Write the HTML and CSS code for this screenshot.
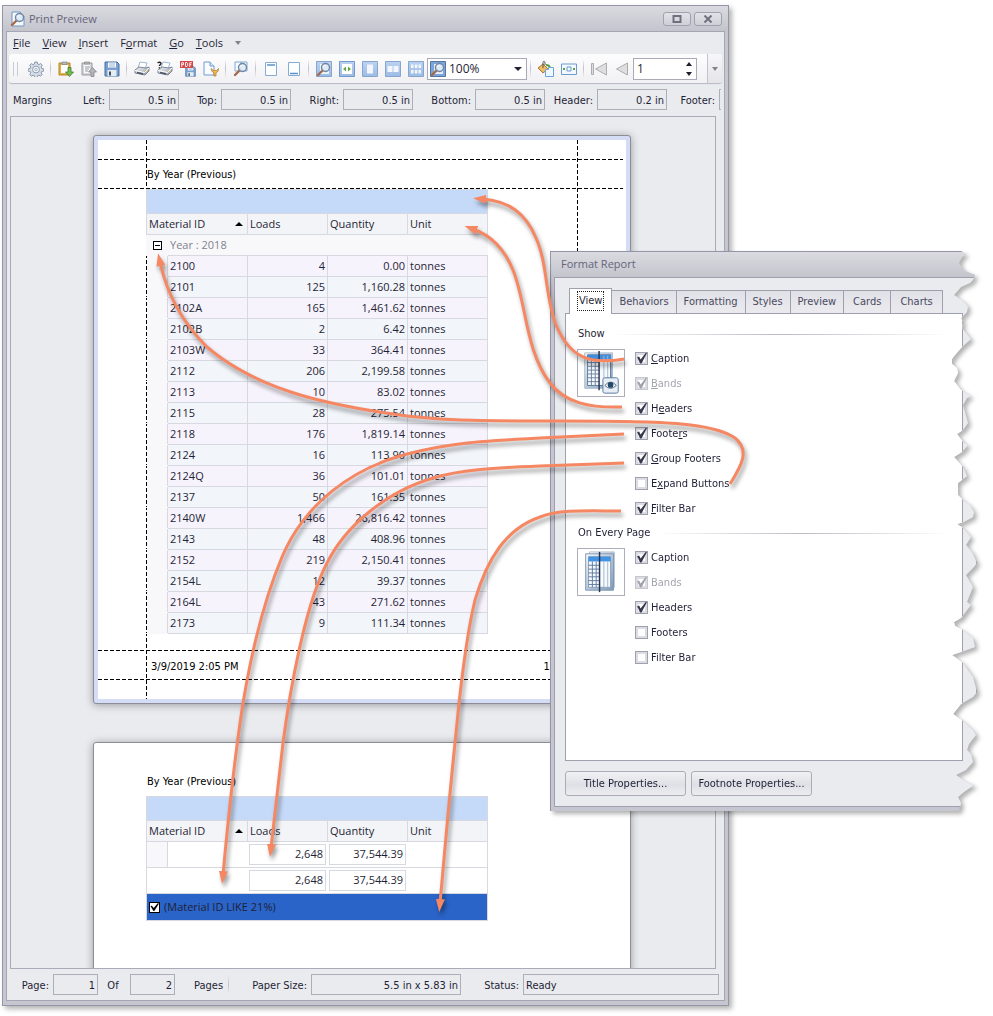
FILE: index.html
```html
<!DOCTYPE html>
<html lang="en">
<head>
<meta charset="utf-8">
<title>Print Preview</title>
<link rel="stylesheet" href="styles.css">
</head>
<body>
<svg class="defs" width="0" height="0" aria-hidden="true">
  <defs>
    <linearGradient id="blue" x1="0" y1="0" x2="0" y2="1"><stop offset="0" stop-color="#bcd2f0"/><stop offset="1" stop-color="#9dbce4"/></linearGradient>
    <linearGradient id="steel" x1="0" y1="0" x2="1" y2="1"><stop offset="0" stop-color="#f4f5f7"/><stop offset="1" stop-color="#8d98a8"/></linearGradient>
    <linearGradient id="book" x1="0" y1="0" x2="1" y2="1"><stop offset="0" stop-color="#f5f9fd"/><stop offset="1" stop-color="#7f9ab8"/></linearGradient>
    <symbol id="lens" viewBox="0 0 16 16">
      <path d="M7 9L2 14" stroke="#a5694a" stroke-width="2.4" stroke-linecap="round"/>
      <circle cx="9.5" cy="6.5" r="4" fill="#dce9f6" fill-opacity=".85" stroke="#71869f" stroke-width="1.4"/>
      <path d="M7.5 6a2.4 2.4 0 0 1 2-1.8" stroke="#fff" fill="none"/>
    </symbol>
    <symbol id="printer" viewBox="0 0 16 16">
      <path d="M6 1l7 1-2 6-7-1z" fill="#fff" stroke="#8aa6c4" stroke-width=".8"/>
      <path d="M1 9l4-3 7 1 3-1v4l-4 4L1 12z" fill="url(#steel)" stroke="#737e8e" stroke-width=".9"/>
      <path d="M1 9.500l9.500 2L15 7" fill="none" stroke="#fff" stroke-width="1"/>
      <path d="M3 11.500l6 1.500" stroke="#4c5664" stroke-width="1.400"/>
      <circle cx="12.500" cy="10.600" r=".9" fill="#e9c34d"/>
    </symbol>
    <symbol id="disk" viewBox="0 0 16 16">
      <path d="M1 1h12l2 2v12H1z" fill="#7aa0cf" stroke="#46709f"/>
      <path d="M4 1.500h8v5H4z" fill="#f8fbff"/><path d="M5 3h6M5 5h6" stroke="#9fb6d0"/>
      <path d="M3.500 9h9v6h-9z" fill="#e4ecf6"/><path d="M5 10.500h2v4H5z" fill="#47515f"/>
    </symbol>
  </defs>
</svg>

<main class="stage">
  <section class="window">
    <header class="titlebar">
      <svg width="16" height="16" viewBox="0 0 16 16" aria-hidden="true"><path d="M2 1h8l4 4v10H2z" fill="#f4f8fd" stroke="#6f97c6"/><use href="#lens" width="16" height="16"/></svg>
      <h1>Print Preview</h1>
      <button class="win-btn" aria-label="Maximize"><svg width="10" height="8" viewBox="0 0 10 8"><path d="M1.500 1h7v6h-7z" fill="none" stroke="#6f707f" stroke-width="2"/></svg></button>
      <button class="win-btn" aria-label="Close"><svg width="10" height="8" viewBox="0 0 10 8"><path d="M1.500.5l7 7M8.500.5l-7 7" stroke="#6f707f" stroke-width="2"/></svg></button>
    </header>

    <div class="client">
      <nav class="menu">
        <button><u>F</u>ile</button><button><u>V</u>iew</button><button><u>I</u>nsert</button><button>F<u>o</u>rmat</button><button><u>G</u>o</button><button><u>T</u>ools</button><button class="more" aria-label="More"><span class="tri"></span></button>
      </nav>

      <div class="toolbar">
        <span class="grip"></span>
        <button aria-label="Settings"><svg viewBox="0 0 16 16"><path d="M6.800 1h2.400l.4 2 1.300.6 1.800-1.100 1.600 1.700-1.100 1.700.5 1.400 2 .5v2.300l-2 .4-.6 1.400 1.100 1.700-1.600 1.600-1.700-1.100-1.400.6-.4 2H6.800l-.4-2-1.300-.6-1.800 1.100-1.600-1.600 1.100-1.700-.6-1.400-2-.4V7.800l2-.4.6-1.400-1.100-1.700 1.600-1.700 1.800 1.100L6.400 3z" fill="#d6dde7" stroke="#8291a6" stroke-width=".9"/><circle cx="8" cy="8.500" r="3.400" fill="#f5f7fa" stroke="#8c9bb0"/><circle cx="8" cy="8.500" r="1.200" fill="#fff" stroke="#8c9bb0" stroke-width=".8"/></svg></button>
        <span class="sep"></span>
        <button aria-label="Import"><svg viewBox="0 0 16 16"><path d="M1 2h11v12H1z" fill="#e4b04a" stroke="#b58423"/><path d="M3 4h7v8H3z" fill="#fff"/><path d="M4 1h5v2.500H4z" fill="#b4bac3" stroke="#7b8491" stroke-width=".7"/><path d="M10 6.500h3V11h2.500l-4 4.500-4-4.500H10z" fill="#78b956" stroke="#3d7e28" stroke-width=".8"/></svg></button>
        <button aria-label="Export"><svg viewBox="0 0 16 16"><path d="M1 2h10v12H1z" fill="#d5d6d9" stroke="#98999d"/><path d="M3 4h6v8H3z" fill="#fafafa"/><path d="M4 6h5M4 8h4M4 10h3" stroke="#999"/><path d="M3.500 1h5v2h-5z" fill="#bbb" stroke="#888" stroke-width=".7"/><path d="M10 15.500h3V11h2.500l-4-4.500-4 4.500H10z" fill="#b5b7ba" stroke="#85878b" stroke-width=".8"/></svg></button>
        <button aria-label="Save"><svg viewBox="0 0 16 16"><use href="#disk"/></svg></button>
        <span class="sep"></span>
        <button aria-label="Print"><svg viewBox="0 0 16 16"><use href="#printer"/></svg></button>
        <button aria-label="Print dialog"><svg viewBox="0 0 16 16"><use href="#printer"/><path d="M.8 2.200C1 .8 4 .8 4 2.500 4 3.800 2.400 3.600 2.400 5M2.400 6.200v1.300" fill="none" stroke="#222" stroke-width="1.400"/></svg></button>
        <button aria-label="Export PDF"><svg viewBox="0 0 16 16"><use href="#disk" x="5" y="5" width="11" height="11"/><path d="M0 0h13v7H0z" fill="#d64545"/><path d="M1.700 6V1.700h1.800v2H1.700M5.500 1.500v4H7l.7-1V2.500l-.7-1zM9.800 6V1.700h2M9.800 3.600h1.500" fill="none" stroke="#fff" stroke-width=".9"/></svg></button>
        <button aria-label="Page setup"><svg viewBox="0 0 16 16"><path d="M1 1h6l4 4v9H1z" fill="#f8fbff" stroke="#6f9bce"/><path d="M7 1v4h4" fill="#dbe8f7" stroke="#6f9bce"/><path d="M8 7.500l1 3 2 1v3.500h2v-3.500l2-1 .5-3-2 2h-3z" fill="#f1c15f" stroke="#b77d23" stroke-width=".8"/></svg></button>
        <span class="sep"></span>
        <button aria-label="Find"><svg viewBox="0 0 16 16"><path d="M2 1h12v9H2zM8 1v9" fill="#f6faff" stroke="#7fa9d6"/><use href="#lens"/></svg></button>
        <span class="sep"></span>
        <button aria-label="Header"><svg viewBox="0 0 16 16"><path d="M2.500 1.500h11v13h-11z" fill="#fdfeff" stroke="#86abd6"/><path d="M4 4h8" stroke="#5d8fca" stroke-width="1.500"/></svg></button>
        <button aria-label="Footer"><svg viewBox="0 0 16 16"><path d="M2.500 1.500h11v13h-11z" fill="#fdfeff" stroke="#86abd6"/><path d="M4 12.500h8" stroke="#5d8fca" stroke-width="1.500"/></svg></button>
        <span class="sep"></span>
        <button aria-label="Zoom"><svg viewBox="0 0 16 16"><path d="M.5.5h15v15H.5z" fill="url(#blue)" stroke="#86a6cf"/><path d="M4 3h7l2 2v8H4z" fill="#eef4fb"/><use href="#lens"/></svg></button>
        <button aria-label="Page width"><svg viewBox="0 0 16 16"><path d="M.5.5h15v15H.5z" fill="url(#blue)" stroke="#7399ca"/><path d="M3 3h10v10H3z" fill="#fff"/><path d="M4 8l3-2.500v5zM12 8L9 5.500v5z" fill="#5faa49"/></svg></button>
        <button aria-label="One page"><svg viewBox="0 0 16 16"><path d="M.5.5h15v15H.5z" fill="url(#blue)" stroke="#86a6cf"/><path d="M5 3.500h6v9H5z" fill="#f3f7fc"/></svg></button>
        <button aria-label="Two pages"><svg viewBox="0 0 16 16"><path d="M.5.5h15v15H.5z" fill="url(#blue)" stroke="#86a6cf"/><path d="M2.500 5h5v6h-5zM8.500 5h5v6h-5z" fill="#f3f7fc"/></svg></button>
        <button aria-label="Multiple pages"><svg viewBox="0 0 16 16"><path d="M.5.5h15v15H.5z" fill="url(#blue)" stroke="#86a6cf"/><path d="M3 3.500h2.500v3.500H3zM6.800 3.500h2.500v3.500H6.800zM10.500 3.500H13v3.500h-2.500zM3 9h2.500v3.500H3zM6.800 9h2.500v3.500H6.800zM10.500 9H13v3.500h-2.500z" fill="#f3f7fc"/></svg></button>
        <div class="combo">
          <svg viewBox="0 0 16 16"><path d="M.5.5h15v15H.5z" fill="#7ea5da" stroke="#54759f"/><path d="M4 3h7l2 2v8H4z" fill="#e3edf9"/><use href="#lens"/></svg>
          <select aria-label="Zoom level"><option>100%</option></select>
          <span class="tri dark"></span>
        </div>
        <span class="sep"></span>
        <button aria-label="Background"><svg viewBox="0 0 16 16"><path d="M0 7l5-4 5 5-5 4z" fill="#edbd65" stroke="#aa7b35"/><path d="M5 7V1.500C5-.2 7-.2 7 2v2" fill="none" stroke="#555"/><path d="M8 4c3 0 4 1 4 4" fill="none" stroke="#5aa347" stroke-width="2"/><path d="M7.500 8.500h3v-2h5v9h-8z" fill="#eff7ff" stroke="#6da4dc"/></svg></button>
        <button aria-label="Fit margins"><svg viewBox="0 0 16 16"><path d="M.5 3h15v10.500H.5z" fill="#f3f8fe" stroke="#6d9ad0"/><path d="M6 6h4v4H6z" fill="none" stroke="#6d9ad0"/><path d="M2 8h2M14 8h-2" stroke="#5aa347" stroke-width="2"/></svg></button>
        <span class="sep"></span>
        <button aria-label="First page"><svg viewBox="0 0 16 16"><path d="M.5 2.500h2v11h-2zM15.500 2v12L4.500 8z" fill="#dedede" stroke="#adadad"/></svg></button>
        <button aria-label="Previous page"><svg viewBox="0 0 16 16"><path d="M13.500 2v12L2.500 8z" fill="#dedede" stroke="#adadad"/></svg></button>
        <div class="spinner"><input type="text" value="1" aria-label="Page number"><span class="arrows"><i class="up"></i><i class="down"></i></span></div>
        <button class="overflow" aria-label="Toolbar options"><span class="tri"></span></button>
      </div>

      <div class="fields margins">
        <span>Margins</span>
        <label class="lead" for="m-left">Left:</label><input id="m-left" value="0.5 in">
        <label class="short" for="m-top">Top:</label><input id="m-top" value="0.5 in">
        <label class="mid" for="m-right">Right:</label><input id="m-right" value="0.5 in">
        <label class="long" for="m-bottom">Bottom:</label><input id="m-bottom" value="0.5 in">
        <label class="mid" for="m-header">Header:</label><input id="m-header" value="0.2 in">
        <label class="mid" for="m-footer">Footer:</label><input id="m-footer" value="">
      </div>

      <div class="preview">
        <article class="page selected">
          <div class="sheet">
            <div class="margin"></div>
            <div class="page-head">By Year (Previous)</div>
            <table class="grid">
              <colgroup><col class="c-indent"><col class="c-col"><col class="c-col"><col class="c-col"><col class="c-col"></colgroup>
              <thead>
                <tr class="caption"><td colspan="5"></td></tr>
                <tr class="heads"><th colspan="2">Material ID<span class="sort"></span></th><th>Loads</th><th>Quantity</th><th>Unit</th></tr>
              </thead>
              <tbody>
                <tr class="group"><td><button class="expand" aria-label="Collapse group"></button></td><td colspan="4">Year : 2018</td></tr>
                <tr><td></td><td>2100</td><td>4</td><td>0.00</td><td>tonnes</td></tr>
                <tr><td></td><td>2101</td><td>125</td><td>1,160.28</td><td>tonnes</td></tr>
                <tr><td></td><td>2102A</td><td>165</td><td>1,461.62</td><td>tonnes</td></tr>
                <tr><td></td><td>2102B</td><td>2</td><td>6.42</td><td>tonnes</td></tr>
                <tr><td></td><td>2103W</td><td>33</td><td>364.41</td><td>tonnes</td></tr>
                <tr><td></td><td>2112</td><td>206</td><td>2,199.58</td><td>tonnes</td></tr>
                <tr><td></td><td>2113</td><td>10</td><td>83.02</td><td>tonnes</td></tr>
                <tr><td></td><td>2115</td><td>28</td><td>275.54</td><td>tonnes</td></tr>
                <tr><td></td><td>2118</td><td>176</td><td>1,819.14</td><td>tonnes</td></tr>
                <tr><td></td><td>2124</td><td>16</td><td>113.90</td><td>tonnes</td></tr>
                <tr><td></td><td>2124Q</td><td>36</td><td>101.01</td><td>tonnes</td></tr>
                <tr><td></td><td>2137</td><td>50</td><td>161.35</td><td>tonnes</td></tr>
                <tr><td></td><td>2140W</td><td>1,466</td><td>26,816.42</td><td>tonnes</td></tr>
                <tr><td></td><td>2143</td><td>48</td><td>408.96</td><td>tonnes</td></tr>
                <tr><td></td><td>2152</td><td>219</td><td>2,150.41</td><td>tonnes</td></tr>
                <tr><td></td><td>2154L</td><td>12</td><td>39.37</td><td>tonnes</td></tr>
                <tr><td></td><td>2164L</td><td>43</td><td>271.62</td><td>tonnes</td></tr>
                <tr><td></td><td>2173</td><td>9</td><td>111.34</td><td>tonnes</td></tr>
              </tbody>
            </table>
            <div class="page-foot"><span>3/9/2019 2:05 PM</span><span>1 of 2</span></div>
            <div class="margin"></div>
          </div>
        </article>

        <article class="page">
          <div class="sheet">
            <div class="margin"></div>
            <div class="page-head">By Year (Previous)</div>
            <table class="grid summary">
              <colgroup><col class="c-indent"><col class="c-col"><col class="c-col"><col class="c-col"><col class="c-col"></colgroup>
              <thead>
                <tr class="caption"><td colspan="5"></td></tr>
                <tr class="heads"><th colspan="2">Material ID<span class="sort"></span></th><th>Loads</th><th>Quantity</th><th>Unit</th></tr>
              </thead>
              <tbody>
                <tr class="total"><td class="indent"></td><td></td><td><span>2,648</span></td><td><span>37,544.39</span></td><td></td></tr>
                <tr class="total"><td></td><td></td><td><span>2,648</span></td><td><span>37,544.39</span></td><td></td></tr>
                <tr class="filter"><td colspan="5"><label><input type="checkbox" checked>(Material ID LIKE 21%)</label></td></tr>
              </tbody>
            </table>
          </div>
        </article>
      </div>

      <div class="fields status">
        <label class="s-page" for="s-page">Page:</label><input class="num" id="s-page" value="1">
        <label class="s-of" for="s-of">Of</label><input class="num" id="s-of" value="2">
        <span class="s-pages">Pages</span><span class="sep"></span>
        <label class="s-size" for="s-size">Paper Size:</label><input class="size" id="s-size" value="5.5 in x 5.83 in">
        <label class="s-status" for="s-status">Status:</label><input class="ready" id="s-status" value="Ready">
      </div>
    </div>
  </section>

  <div class="dialog-shadow">
    <section class="dialog">
      <h2>Format Report</h2>
      <div class="dialog-body">
        <div class="tabs" role="tablist">
          <button class="active" role="tab" aria-selected="true"><span>View</span></button><button role="tab">Behaviors</button><button role="tab">Formatting</button><button role="tab">Styles</button><button role="tab">Preview</button><button role="tab">Cards</button><button role="tab">Charts</button>
        </div>
        <div class="panel">
          <h3>Show</h3>
          <div class="options">
            <div class="pic">
              <svg viewBox="0 0 48 48"><path d="M7 3h29v37H7z" fill="url(#book)" stroke="#a9bccf"/><path d="M10 5h24v32H10z" fill="#f7fafd" stroke="#5c7896"/><path d="M10 5h24v5H10z" fill="#3f8ee0"/><path d="M10 13h12M10 17h12M10 21h12M10 25h12M10 29h12M10 33h12M14 10v27M18 10v27" stroke="#6982a2"/><path d="M27 6v31M31 6v31" stroke="#a5b7cc"/><path d="M22 1v41" stroke="#27324f" stroke-width="1.500"/><rect x="26" y="29" width="16" height="16" rx="2" fill="#e7eef6" stroke="#587a9e"/><path d="M28 37q6-7 12 0q-6 6-12 0z" fill="#fff" stroke="#567"/><circle cx="34" cy="36.500" r="3" fill="#234a6c"/></svg>
            </div>
            <div class="checks">
              <label><input type="checkbox" checked><span><u>C</u>aption</span></label>
              <label class="off"><input type="checkbox" checked disabled><span><u>B</u>ands</span></label>
              <label><input type="checkbox" checked><span>H<u>e</u>aders</span></label>
              <label><input type="checkbox" checked><span>Foote<u>r</u>s</span></label>
              <label><input type="checkbox" checked><span><u>G</u>roup Footers</span></label>
              <label><input type="checkbox"><span>E<u>x</u>pand Buttons</span></label>
              <label><input type="checkbox" checked><span><u>F</u>ilter Bar</span></label>
            </div>
          </div>
          <h3>On Every Page</h3>
          <div class="options">
            <div class="pic">
              <svg viewBox="0 0 48 48"><path d="M12 3h26v37H12z" fill="url(#book)" stroke="#b6c5d5"/><path d="M8 5h29v38H8z" fill="url(#book)" stroke="#8299b1"/><path d="M11 8h23v32H11z" fill="#f7fafd" stroke="#8ba0b8"/><path d="M11 8h23v5H11z" fill="#4194e4"/><path d="M11 17h12M11 21h12M11 25h12M11 29h12M11 33h12M11 37h12M15 13v27M19 13v27" stroke="#5e7ca4"/><path d="M27 13v27M31 13v27" stroke="#a5b7cc"/><path d="M22.500 3v42" stroke="#27324f" stroke-width="1.500"/></svg>
            </div>
            <div class="checks">
              <label><input type="checkbox" checked><span>Caption</span></label>
              <label class="off"><input type="checkbox" checked disabled><span>Bands</span></label>
              <label><input type="checkbox" checked><span>Headers</span></label>
              <label><input type="checkbox"><span>Footers</span></label>
              <label><input type="checkbox"><span>Filter Bar</span></label>
            </div>
          </div>
        </div>
        <div class="actions"><button>Title Properties...</button><button>Footnote Properties...</button></div>
      </div>
    </section>
  </div>

  <svg class="callouts" width="800" height="1000" viewBox="0 0 800 1000" aria-hidden="true">
    <defs><marker id="head" markerUnits="userSpaceOnUse" markerWidth="14" markerHeight="10" refX="4" refY="5" orient="auto"><path d="M0 .5L13 5L0 9.500z" fill="#f58763"/></marker></defs>
    <g fill="none" stroke="#f58763" stroke-width="3">
      <path d="M624 359C590 365 570 358 556 325C545 297 548 265 536 238C526 214 510 201 482 199" marker-end="url(#head)"/>
      <path d="M622 407C590 408 565 403 550 383C525 350 527 305 513 270C504 248 490 235 473 229" marker-end="url(#head)"/>
      <path d="M730 484C742 465 750 450 735 438C712 422 660 421 560 421C500 421 440 421 400 415C320 404 255 388 207 347C180 320 166 290 160 262" marker-end="url(#head)"/>
      <path d="M624 434L540 438C480 441 450 443 407 454C350 469 304 505 282 557C264 600 251 655 243 703C235 755 228 820 223 875" marker-end="url(#head)"/>
      <path d="M624 463L540 466C490 468 460 470 433 478C385 492 345 527 327 563C305 605 290 690 283 743C279 780 275 815 271 848" marker-end="url(#head)"/>
      <path d="M621 511C590 511 560 509 540 517C505 529 487 560 475 600C463 650 458 715 455 743C449 800 444 860 440 903" marker-end="url(#head)"/>
    </g>
  </svg>
</main>
</body>
</html>
```
FILE: styles.css
```css
* { box-sizing: border-box; }
body { margin: 0; background: #fff; color: #1f1f35; font: 11px/14px "DejaVu Sans Condensed", "DejaVu Sans", sans-serif; }
button, input, select { font: inherit; color: inherit; margin: 0; }
button { border: 0; padding: 0; background: none; }
h1, h2, h3 { margin: 0; font-weight: normal; }
.defs { position: absolute; }
u { text-underline-offset: 1px; }

.stage { position: relative; padding: 5px 264px 11px 2px; }
.window { border: 1px solid #9495a6; background: #c6c6d0; padding: 0 3px 4px; box-shadow: 3px 3px 5px rgba(0, 0, 0, .3); }
.titlebar { display: flex; align-items: center; gap: 3px; height: 25px; margin: 0 -3px; padding: 0 6px 0 7px; background: linear-gradient(#dadae0, #c4c4cd); }
.titlebar h1 { flex: 1; }
.titlebar h1, .dialog h2 { color: #65657a; font: 11px/16px "Open Sans", sans-serif; }
.win-btn { display: grid; place-items: center; width: 28px; height: 14px; border: 1px solid #a0a1ae; border-radius: 3px; background: linear-gradient(#e2e2e8, #cfcfd7); }
.client { border: 1px solid #a5a6b2; background: #eaebef; padding: 0 2px; overflow: hidden; }

.menu { display: flex; align-items: center; gap: 12px; height: 22px; padding-left: 4px; font: 11px/16px "Open Sans", sans-serif; }
.tri { display: block; border: 3px solid transparent; border-top: 4px solid #82838f; border-bottom: 0; }
.tri.dark { border-width: 4px 4px 0; border-top-color: #222233; }

.toolbar { display: flex; align-items: center; height: 29px; border-radius: 3px; background: linear-gradient(#fdfdfe, #f1f1f4); box-shadow: 0 1px 1px #b6b7c2; padding-left: 4px; }
.toolbar button { display: grid; place-items: center; flex: none; width: 23px; height: 23px; }
.toolbar svg { width: 16px; height: 16px; }
.grip { width: 5px; height: 14px; margin-right: 6px; border: solid #cacbd3; border-width: 0 1px; }
.sep { flex: none; width: 7px; height: 19px; background: linear-gradient(transparent, #bfc0ca, transparent) center / 1px 100% no-repeat; }
.combo { display: flex; align-items: center; gap: 3px; width: 100px; height: 22px; padding: 0 4px 0 2px; border: 1px solid #a9abb8; background: #fff; }
.combo select { appearance: none; flex: 1; min-width: 0; border: 0; padding: 0; background: none; font: 12px/18px "Open Sans", sans-serif; }
.spinner { display: flex; align-items: center; width: 64px; height: 22px; border: 1px solid #a9abb8; background: #fff; padding: 0 4px 0 3px; }
.spinner input { flex: 1; min-width: 0; border: 0; padding: 0; font: 12px/18px "Open Sans", sans-serif; background: none; }
.arrows { display: grid; gap: 6px; }
.up, .down { border: 3px solid transparent; }
.up { border-top: 0; border-bottom: 4px solid #1d1d2c; }
.down { border-bottom: 0; border-top: 4px solid #1d1d2c; }
.toolbar .overflow { width: 15px; height: 29px; margin-left: auto; border-left: 1px solid #c3c4ce; border-radius: 0 3px 3px 0; background: linear-gradient(#f7f7f9, #e4e4e9); }

.fields { display: flex; align-items: center; height: 33px; white-space: nowrap; }
.fields input { flex: none; width: 70px; height: 21px; border: 1px solid #adaeba; padding: 1px 2px 0; background: #eaebef; text-align: right; }
.fields label, .fields > span { flex: none; padding-top: 2px; }
.fields label { padding-right: 4px; text-align: right; }
.margins { margin-right: 1px; padding-left: 4px; overflow: hidden; }
.margins > span { width: 38px; }
.margins .lead { width: 58px; }
.short { width: 42px; }
.mid { width: 52px; }
.long { width: 62px; }

.preview { height: 853px; margin: 0 6px 0 1px; border: 1px solid #a9abb8; padding: 18px 2px 0 0; overflow: hidden; }
.page { width: 538px; margin: 0 auto 38px; border: 1px solid #8d8e95; border-radius: 3px; padding: 4px; background: #fff; box-shadow: 0 1px 9px rgba(0, 0, 0, .35); color: #000; }
.page.selected { background: #d4dcf6; }
.page:not(.selected) { height: 569px; }
.sheet { background: #fff; }
.selected .sheet {
  background:
    repeating-linear-gradient(#000 0 4px, transparent 4px 6px) 48px 0 / 1px 100% no-repeat,
    repeating-linear-gradient(#000 0 4px, transparent 4px 6px) 479px 0 / 1px 100% no-repeat,
    #fff;
}
.margin { height: 19px; }
.page-head { height: 30px; padding: 8px 0 0 49px; line-height: 16px; }
.selected .page-head, .page-foot {
  background:
    repeating-linear-gradient(90deg, #000 0 4px, transparent 4px 6px) 0 0 / 525px 1px no-repeat,
    repeating-linear-gradient(90deg, #000 0 4px, transparent 4px 6px) 0 100% / 525px 1px no-repeat;
}
.page-foot { display: flex; justify-content: space-between; height: 30px; margin-top: 16px; padding: 10px 54px 0 53px; }

.grid { width: 342px; margin-left: 48px; border-collapse: collapse; table-layout: fixed; color: #1f1f35; font: 11px/16px "Open Sans", sans-serif; }
.c-indent { width: 21px; }
.c-col { width: 80px; }
.grid tr { height: 21px; }
.grid td, .grid th { border: 1px solid #d8d9e0; padding: 0 2px; text-align: left; font-weight: normal; white-space: nowrap; }
.grid .caption { height: 24px; }
.grid .caption td { background: #c5daf8; }
.heads th { background: #f3f4f7; }
.sort { float: right; margin: 6px 2px 0 0; border: 4px solid transparent; border-top: 0; border-bottom: 4px solid #000; }
.grid tbody td:first-child { background: #f8f8fb; border-color: #f8f8fb #d8d9e0 #f8f8fb transparent; }
.grid .group td, .grid .group td:first-child { background: #f8f8fb; color: #82828f; border-left-color: #f8f8fb; border-right-color: #f8f8fb; border-top-color: #d8d9e0; }
.expand { display: block; width: 9px; height: 9px; margin: 0 4px; border: 1px solid #000; background: linear-gradient(#000, #000) center / 5px 1px no-repeat #fff; }
.selected tbody tr:nth-child(even) td:not(:first-child) { background: #f7f3fd; }
.selected tbody tr:nth-child(odd):not(.group) td:not(:first-child) { background: #f2f5fa; }
.selected tbody td:nth-child(3), .selected tbody td:nth-child(4) { text-align: right; }
.grid .total { height: 26px; }
.grid .total td, .grid .total td:first-child { background: #fff; border-color: #d8d9e0 transparent; padding: 0 1px; }
.grid .total td.indent { background: #f8f8fb; border-right-color: #d8d9e0; }
.grid .total td:first-child { border-left-color: #d8d9e0; }
.grid .total td:last-child { border-right-color: #d8d9e0; }
.total span { display: block; height: 21px; border: 1px solid #d8d9e0; padding: 1px 2px; text-align: right; }
.grid .filter { height: 27px; }
.grid .filter td:first-child { background: #2a64c8; border-color: #d8d9e0; }
.filter label { display: flex; align-items: center; gap: 4px; }
.filter input { appearance: none; width: 11px; height: 11px; margin: 0; border: 1px solid #000; background: #fff; }
.filter input::after, .checks input:checked::after { content: ""; display: block; width: 100%; height: 100%; background: #000; clip-path: polygon(5% 40%, 20% 35%, 42% 62%, 85% 8%, 100% 10%, 48% 95%, 38% 95%); }

.fields.status { height: 31px; padding-left: 12px; }
.fields .num { width: 45px; }
.fields label.s-page { width: 32px; }
.fields label.s-of { width: 32px; padding-right: 2px; text-align: center; }
.fields .s-pages { width: 50px; padding-left: 19px; }
.fields.status .sep { margin: 0 20px 0 0; }
.fields .s-size { width: 59px; }
.fields .size { width: 150px; }
.fields .s-status { width: 62px; }
.fields .ready { flex: 1; min-width: 0; margin-right: 3px; text-align: left; }

.dialog-shadow { position: absolute; left: 550px; top: 251px; filter: drop-shadow(3px 3px 2px rgba(0, 0, 0, .3)); }
.dialog {
  width: 427px; border: 1px solid #9495a6; background: #c6c6d0; padding-bottom: 4px;
  clip-path: polygon(0 0, 411px 0, 416px 3px, 412px 6px, 409px 12px, 412px 17px, 415px 20px, 425px 24px, 423px 29px, 420px 32px, 411px 36px, 404px 44px, 412px 49px, 418px 55px, 417px 61px, 411px 67px, 413px 71px, 412px 77px, 421px 88px, 412px 96px, 405px 104px, 402px 108px, 402px 113px, 407px 117px, 408px 122px, 404px 130px, 411px 139px, 421px 145px, 417px 147px, 413px 154px, 418px 172px, 413px 179px, 407px 183px, 413px 191px, 418px 194px, 412px 201px, 404px 206px, 413px 216px, 417px 225px, 408px 232px, 408px 244px, 413px 249px, 420px 254px, 424px 261px, 423px 266px, 414px 271px, 407px 273px, 413px 277px, 421px 286px, 416px 294px, 422px 301px, 427px 312px, 423px 317px, 416px 324px, 423px 336px, 417px 351px, 421px 354px, 411px 367px, 404px 371px, 405px 375px, 413px 379px, 423px 387px, 425px 396px, 414px 400px, 402px 404px, 413px 412px, 423px 426px, 427px 441px, 423px 446px, 411px 453px, 403px 463px, 413px 470px, 423px 479px, 426px 484px, 419px 493px, 417px 499px, 421px 503px, 423px 511px, 416px 519px, 406px 524px, 415px 530px, 424px 534px, 414px 541px, 408px 546px, 411px 552px, 409px 560px, 0 560px);
}
.dialog h2 { height: 25px; padding: 4px 10px; background: linear-gradient(#dadae0, #c4c4cd); }
.dialog-body { margin-left: 3px; border: 1px solid #9fa0ae; border-right: 0; background: #eaebef; padding: 9px 13px 10px 10px; }
.tabs { display: flex; align-items: flex-end; height: 26px; padding-left: 4px; }
.tabs button { height: 23px; margin-left: -1px; padding: 0 7px; border: 1px solid #9fa0ae; border-bottom: 0; background: linear-gradient(#e0e1e7, #ebebef); color: #4a4a60; }
.tabs button:nth-last-child(-n+2) { padding: 0 9px; }
.tabs .active { position: relative; height: 26px; margin: 0 0 -1px; padding: 0 8px 2px; background: #fff; color: #1f1f35; }
.tabs .active span { display: block; padding: 2px 1px; outline: 1px dotted #222; }
.panel { height: 448px; border: 1px solid #9fa0ae; background: #fff; padding: 10px 12px; }
.panel h3 { display: flex; align-items: center; gap: 6px; height: 20px; margin-bottom: 2px; font-size: 11px; }
.panel h3::after { content: ""; flex: 1; height: 1px; background: linear-gradient(90deg, transparent, #babbc5, transparent); }
.options { display: flex; align-items: flex-start; gap: 10px; margin-bottom: 2px; }
.pic { flex: none; width: 48px; height: 48px; margin-top: 3px; margin-left: -1px; border: 1px solid #adaeba; background: #fff; }
.pic svg { display: block; width: 46px; height: 46px; }
.checks label { display: flex; align-items: center; gap: 3px; height: 25px; }
.checks input { appearance: none; width: 13px; height: 13px; border: 1px solid #9ea0ae; background: #fff; box-shadow: inset 0 0 0 2px #dcdde3; }
.checks input:checked::after { height: 11px; background: #38384d; clip-path: polygon(10% 38%, 28% 32%, 42% 58%, 88% 0, 100% 0, 50% 95%, 38% 95%); }
.checks .off { color: #a4a4ae; }
.checks .off input { border-color: #c5c6ce; }
.checks .off input:checked::after { background: #a2a2ad; }
.actions { display: flex; gap: 5px; padding-top: 10px; }
.actions button { width: 121px; height: 25px; border: 1px solid #abacb8; border-radius: 3px; background: linear-gradient(#f1f1f4, #dfe0e6 55%, #ececf0); }

.callouts { position: absolute; left: 0; top: 0; filter: drop-shadow(2px 4px 2px rgba(0, 0, 0, .4)); }
```
